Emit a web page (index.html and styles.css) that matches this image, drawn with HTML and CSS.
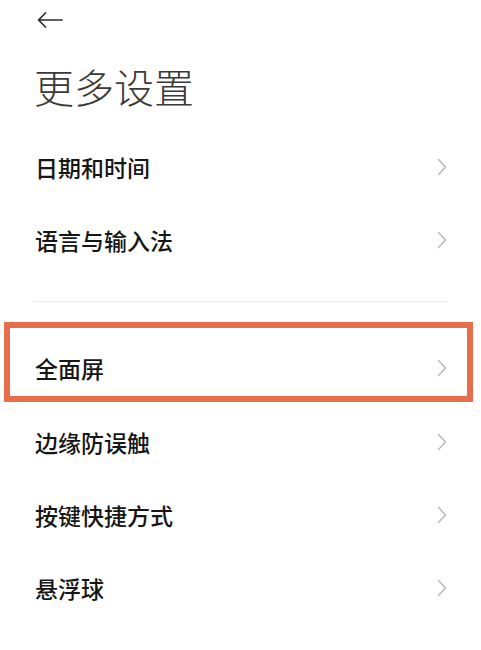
FILE: index.html
```html
<!DOCTYPE html>
<html lang="zh-CN">
<head>
<meta charset="utf-8">
<title>更多设置</title>
<link rel="stylesheet" href="styles.css">
</head>
<body>
<div class="page">
  <header class="header">
    <button class="back" aria-label="返回">
      <svg width="26" height="16" viewBox="0 0 26 16"><path d="M1.5 8 H25 M8.5 1 L1.5 8 L8.5 15" fill="none" stroke="#2b2b2b" stroke-width="1.7" stroke-linecap="round" stroke-linejoin="round"/></svg>
    </button>
    <h1 class="title">更多设置</h1>
  </header>
  <ul class="list">
    <li class="row"><span class="label">日期和时间</span><svg class="chev" width="10" height="18" viewBox="0 0 10 18"><path d="M1.5 1.5 L8.5 9 L1.5 16.5" fill="none" stroke="#b8b8b8" stroke-width="1.5" stroke-linecap="round" stroke-linejoin="round"/></svg></li>
    <li class="row"><span class="label">语言与输入法</span><svg class="chev" width="10" height="18" viewBox="0 0 10 18"><path d="M1.5 1.5 L8.5 9 L1.5 16.5" fill="none" stroke="#b8b8b8" stroke-width="1.5" stroke-linecap="round" stroke-linejoin="round"/></svg></li>
  </ul>
  <div class="divider"></div>
  <ul class="list">
    <li class="row row-highlight"><span class="label">全面屏</span><svg class="chev" width="10" height="18" viewBox="0 0 10 18"><path d="M1.5 1.5 L8.5 9 L1.5 16.5" fill="none" stroke="#b8b8b8" stroke-width="1.5" stroke-linecap="round" stroke-linejoin="round"/></svg></li>
  </ul>
  <ul class="list list-after">
    <li class="row"><span class="label">边缘防误触</span><svg class="chev" width="10" height="18" viewBox="0 0 10 18"><path d="M1.5 1.5 L8.5 9 L1.5 16.5" fill="none" stroke="#b8b8b8" stroke-width="1.5" stroke-linecap="round" stroke-linejoin="round"/></svg></li>
    <li class="row"><span class="label">按键快捷方式</span><svg class="chev" width="10" height="18" viewBox="0 0 10 18"><path d="M1.5 1.5 L8.5 9 L1.5 16.5" fill="none" stroke="#b8b8b8" stroke-width="1.5" stroke-linecap="round" stroke-linejoin="round"/></svg></li>
    <li class="row"><span class="label">悬浮球</span><svg class="chev" width="10" height="18" viewBox="0 0 10 18"><path d="M1.5 1.5 L8.5 9 L1.5 16.5" fill="none" stroke="#b8b8b8" stroke-width="1.5" stroke-linecap="round" stroke-linejoin="round"/></svg></li>
    <li class="row"><span class="label">单手模式</span><svg class="chev" width="10" height="18" viewBox="0 0 10 18"><path d="M1.5 1.5 L8.5 9 L1.5 16.5" fill="none" stroke="#b8b8b8" stroke-width="1.5" stroke-linecap="round" stroke-linejoin="round"/></svg></li>
  </ul>
</div>
</body>
</html>
```
FILE: styles.css
```css
html, body {
  margin: 0;
  padding: 0;
  background: #ffffff;
}
body {
  font-family: "Noto Sans CJK SC", "Noto Sans", sans-serif;
  color: #1a1a1a;
  overflow: hidden;
}
.page {
  width: 481px;
  height: 650px;
  overflow: hidden;
}
.header {
  display: flex;
  flex-direction: column;
  padding-top: 12px;
}
.back {
  display: block;
  margin: 0 0 0 37px;
  padding: 0;
  border: 0;
  background: none;
  width: 26px;
  height: 16px;
}
.back svg {
  display: block;
}
.title {
  margin: 34px 0 0 34px;
  font-size: 40px;
  line-height: 48px;
  font-weight: 300;
  color: #3a3a3a;
}
.list {
  list-style: none;
  margin: 0;
  padding: 0;
}
.header + .list {
  margin-top: 20px;
}
.row {
  display: flex;
  align-items: center;
  justify-content: space-between;
  height: 73px;
  padding: 0 34px 0 35px;
}
.label {
  font-size: 23px;
  line-height: 30px;
  font-weight: 500;
  color: #161616;
}
.chev {
  display: block;
}
.divider {
  height: 1px;
  background: #e8e8e8;
  margin: 25px 33px 20px 33px;
}
.row-highlight {
  height: 56px;
  margin: 0 8px 0 4px;
  border: 6px solid #e86e4b;
  padding: 12px 20px 0 25px;
  box-sizing: content-box;
}
.list-after {
  margin-top: 3px;
}
```
